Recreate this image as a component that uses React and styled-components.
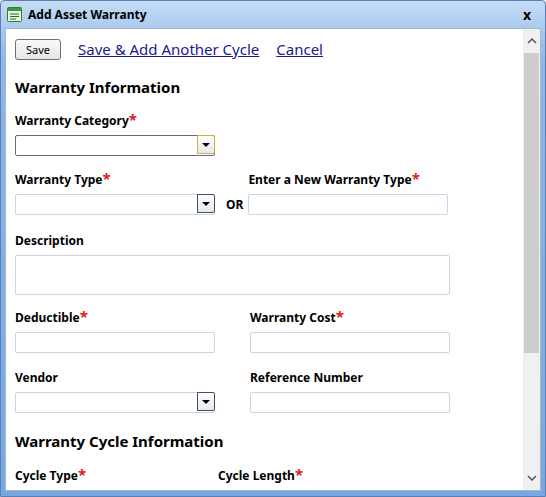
import React from "react";
import styled, { createGlobalStyle } from "styled-components";

const G = createGlobalStyle`
  html,body{margin:0;padding:0;width:546px;height:497px;overflow:hidden;}
  body{font-family:"Noto Sans","Open Sans",sans-serif;}
`;
const Win = styled.div`
  width:546px;height:497px;box-sizing:border-box;
  background:linear-gradient(#c4dbf5,#8fb6e6 12%,#7aa7e0);
  border:1px solid #5a7fb0;border-radius:4px 4px 0 0;
  display:flex;flex-direction:column;padding:0 4px 5px 4px;
`;
const Title = styled.div`
  height:27px;display:flex;align-items:center;gap:6px;
  font-size:12px;font-weight:bold;color:#000;padding-left:2px;
`;
const X = styled.span`margin-left:auto;margin-right:10px;font-size:14px;font-weight:bold;`;
const Body = styled.div`
  flex:1;display:flex;background:#fff;border:1px solid #9fb8d8;overflow:hidden;
`;
const Content = styled.div`flex:1;padding:9px 0 0 9px;overflow:hidden;`;
const Scroll = styled.div`
  width:17px;background:#f0f0f0;display:flex;flex-direction:column;align-items:center;
`;
const Arrow = styled.div`height:24px;display:flex;align-items:center;justify-content:center;`;
const Thumb = styled.div`width:15px;height:300px;background:#cdcdcd;`;
const Toolbar = styled.div`display:flex;align-items:center;gap:17px;height:22px;`;
const Btn = styled.button`
  font-family:inherit;font-size:11px;height:21px;width:46px;padding:0;
  background:linear-gradient(#fafafa,#e6e6e6);border:1px solid #707070;border-radius:3px;
`;
const Link = styled.a`font-size:15px;color:#1a1a8c;text-decoration:underline;`;
const H = styled.div`font-size:15px;font-weight:bold;margin:${p=>p.mt}px 0 0 0;height:20px;line-height:20px;`;
const Row = styled.div`display:flex;align-items:flex-end;gap:${p=>p.gap||35}px;margin-top:${p=>p.mt}px;`;
const Field = styled.div`display:flex;flex-direction:column;gap:6px;`;
const Label = styled.div`font-size:12px;font-weight:bold;height:16px;line-height:16px;`;
const Star = styled.span`color:#e02020;font-size:15px;vertical-align:top;line-height:12px;`;
const Input = styled.div`
  width:${p=>p.w||200}px;height:${p=>p.h||21}px;box-sizing:border-box;
  border:1px solid ${p=>p.dark?"#5a6f8a":"#c6d6e6"};border-radius:2px;display:flex;justify-content:flex-end;
`;
const Drop = styled.div`
  width:18px;height:100%;box-sizing:border-box;border:1px solid ${p=>p.focus?"#d9a84a":"#3c4f6b"};
  margin:-1px -1px -1px 0;border-radius:0 2px 2px 0;background:linear-gradient(#fff,#e8e8e8);
  display:flex;align-items:center;justify-content:center;
  &::after{content:"";border-left:4px solid transparent;border-right:4px solid transparent;border-top:4px solid #000;}
`;
const Or = styled.div`font-size:12px;font-weight:bold;height:21px;line-height:21px;margin:0 -30px 0 -24px;`;
const Req = ({t}) => <Label>{t}<Star>*</Star></Label>;

export default function App(){
  return <Win><G/>
    <Title>
      <svg width="15" height="15" viewBox="0 0 15 15"><rect x="0.5" y="0.5" width="14" height="14" rx="1" fill="#e8f5e0" stroke="#2e7d32"/><rect x="1" y="1" width="13" height="3" fill="#3a9a3a"/><path d="M3 7h9M3 9.5h9M3 12h6" stroke="#2e6b2e"/></svg>
      Add Asset Warranty<X>x</X>
    </Title>
    <Body>
      <Content>
        <Toolbar><Btn>Save</Btn><Link>Save &amp; Add Another Cycle</Link><Link>Cancel</Link></Toolbar>
        <H mt={17}>Warranty Information</H>
        <Row mt={16}><Field><Req t="Warranty Category"/><Input dark><Drop focus/></Input></Field></Row>
        <Row mt={16}>
          <Field><Req t="Warranty Type"/><Input><Drop/></Input></Field>
          <Or>OR</Or>
          <Field><Req t="Enter a New Warranty Type"/><Input/></Field>
        </Row>
        <Row mt={18}><Field><Label>Description</Label><Input w={435} h={40}/></Field></Row>
        <Row mt={15}>
          <Field><Req t="Deductible"/><Input/></Field>
          <Field><Req t="Warranty Cost"/><Input/></Field>
        </Row>
        <Row mt={17}>
          <Field><Label>Vendor</Label><Input><Drop/></Input></Field>
          <Field><Label>Reference Number</Label><Input/></Field>
        </Row>
        <H mt={18}>Warranty Cycle Information</H>
        <Row mt={17} gap={132}><Req t="Cycle Type"/><Req t="Cycle Length"/></Row>
      </Content>
      <Scroll>
        <Arrow><svg width="10" height="6"><path d="M1 5L5 1L9 5" stroke="#555" fill="none" strokeWidth="1.5"/></svg></Arrow>
        <Thumb/>
        <div style={{flex:1}}/>
        <Arrow><svg width="10" height="6"><path d="M1 1L5 5L9 1" stroke="#555" fill="none" strokeWidth="1.5"/></svg></Arrow>
      </Scroll>
    </Body>
  </Win>;
}
